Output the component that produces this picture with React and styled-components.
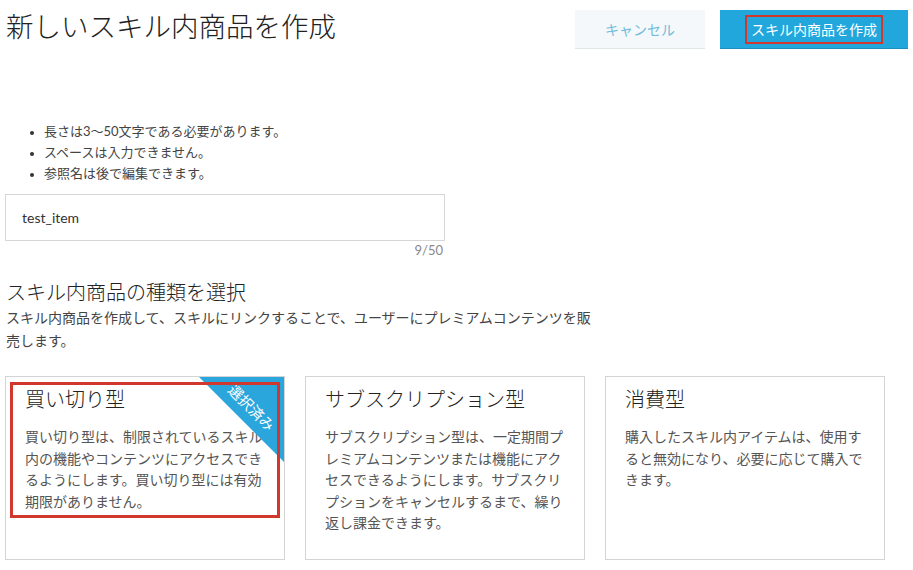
import React from 'react'
import styled, { createGlobalStyle } from 'styled-components'

const GlobalStyle = createGlobalStyle`
  body {
    margin: 0;
    background: #fff;
    font-family: Lato, "Noto Sans CJK JP", sans-serif;
    color: #333;
  }
`

const Page = styled.main`
  width: 913px;
  padding: 10px 5px 0 5px;
  box-sizing: border-box;
`

const Header = styled.header`
  display: flex;
  justify-content: space-between;
  align-items: flex-start;
`

const Title = styled.h1`
  margin: 0;
  padding-left: 1px;
  font-size: 27.5px;
  font-weight: 300;
  line-height: 34px;
  color: #222;
`

const Actions = styled.div`
  display: flex;
  gap: 15px;
`

const Button = styled.button`
  position: relative;
  height: 39px;
  padding: 0;
  border: none;
  font-family: inherit;
  font-size: 14px;
  cursor: pointer;
  width: ${ p => p.primary ? '188px' : '130px' };
  background: ${ p => p.primary ? '#22a7dc' : '#f5f8fa' };
  color: ${ p => p.primary ? '#fff' : '#72bbdb' };
  border-bottom: 1px solid ${ p => p.primary ? '#1b8fbf' : '#e2e7ea' };
`

const Marker = styled.span`
  position: absolute;
  pointer-events: none;
  border: ${ p => p.thick ? '3px' : '2px' } solid #d2372e;
  box-sizing: border-box;
`

const Rules = styled.ul`
  margin: 72px 0 0;
  padding-left: 39px;
  font-size: 13px;
  line-height: 21px;
  color: #444;

  li::marker {
    color: #333;
    font-size: 11px;
  }
`

const Field = styled.div`
  width: 440px;
  margin-top: 10px;
`

const Input = styled.input`
  display: block;
  width: 100%;
  height: 47px;
  box-sizing: border-box;
  border: 1px solid #d6d6d6;
  padding: 0 16px;
  font-family: inherit;
  font-size: 14px;
  color: #333;
  outline: none;
`

const Counter = styled.div`
  text-align: right;
  font-size: 13px;
  line-height: 18px;
  color: #888;
  padding-right: 2px;
`

const SectionTitle = styled.h2`
  margin: 19px 0 0;
  padding-left: 1px;
  font-size: 20px;
  font-weight: 300;
  line-height: 28px;
  color: #222;
`

const Lead = styled.p`
  margin: 0;
  padding-left: 1px;
  width: 596px;
  font-size: 14px;
  line-height: 23px;
  color: #444;
`

const Cards = styled.div`
  display: grid;
  grid-template-columns: repeat(3, 280px);
  gap: 20px;
  margin-top: 24px;
`

const Card = styled.div`
  position: relative;
  height: 184px;
  box-sizing: border-box;
  border: 1px solid #d4d4d4;
  padding: 9px 19px 0;
  overflow: hidden;
  background: #fff;
`

const CardTitle = styled.h3`
  margin: 0;
  font-size: 20px;
  font-weight: 300;
  line-height: 26px;
  color: #222;
`

const CardText = styled.p`
  margin: 14px 0 0;
  font-size: 14px;
  line-height: 21.5px;
  color: #555;
`

const Ribbon = styled.div`
  position: absolute;
  top: 0;
  right: 0;
  width: 85px;
  height: 85px;
  background: #2aa6dc;
  clip-path: polygon(0 0, 100% 0, 100% 100%);
`

const RibbonLabel = styled.span`
  position: absolute;
  top: 21px;
  left: 205px;
  width: 80px;
  height: 20px;
  line-height: 20px;
  text-align: center;
  font-size: 14.5px;
  color: #fff;
  transform: rotate(45deg);
`

const types = [
  {
    title: '買い切り型',
    text: '買い切り型は、制限されているスキル内の機能やコンテンツにアクセスできるようにします。買い切り型には有効期限がありません。',
    selected: true,
  },
  {
    title: 'サブスクリプション型',
    text: 'サブスクリプション型は、一定期間プレミアムコンテンツまたは機能にアクセスできるようにします。サブスクリプションをキャンセルするまで、繰り返し課金できます。',
  },
  {
    title: '消費型',
    text: '購入したスキル内アイテムは、使用すると無効になり、必要に応じて購入できます。',
  },
]

const App = () => (
  <>
    <GlobalStyle />
    <Page>
      <Header>
        <Title>新しいスキル内商品を作成</Title>
        <Actions>
          <Button>キャンセル</Button>
          <Button primary>
            スキル内商品を作成
            <Marker style={ { left: 25, top: 5, width: 138, height: 29 } } />
          </Button>
        </Actions>
      </Header>

      <Rules>
        <li>長さは3〜50文字である必要があります。</li>
        <li>スペースは入力できません。</li>
        <li>参照名は後で編集できます。</li>
      </Rules>

      <Field>
        <Input defaultValue="test_item" />
        <Counter>9/50</Counter>
      </Field>

      <SectionTitle>スキル内商品の種類を選択</SectionTitle>
      <Lead>
        スキル内商品を作成して、スキルにリンクすることで、ユーザーにプレミアムコンテンツを販売します。
      </Lead>

      <Cards>
        { types.map(t => (
          <Card key={ t.title }>
            <CardTitle>{ t.title }</CardTitle>
            <CardText>{ t.text }</CardText>
            { t.selected && (
              <>
                <Ribbon />
                <RibbonLabel>選択済み</RibbonLabel>
                <Marker thick style={ { left: 4, top: 5, width: 270, height: 136 } } />
              </>
            ) }
          </Card>
        )) }
      </Cards>
    </Page>
  </>
)

export default App
